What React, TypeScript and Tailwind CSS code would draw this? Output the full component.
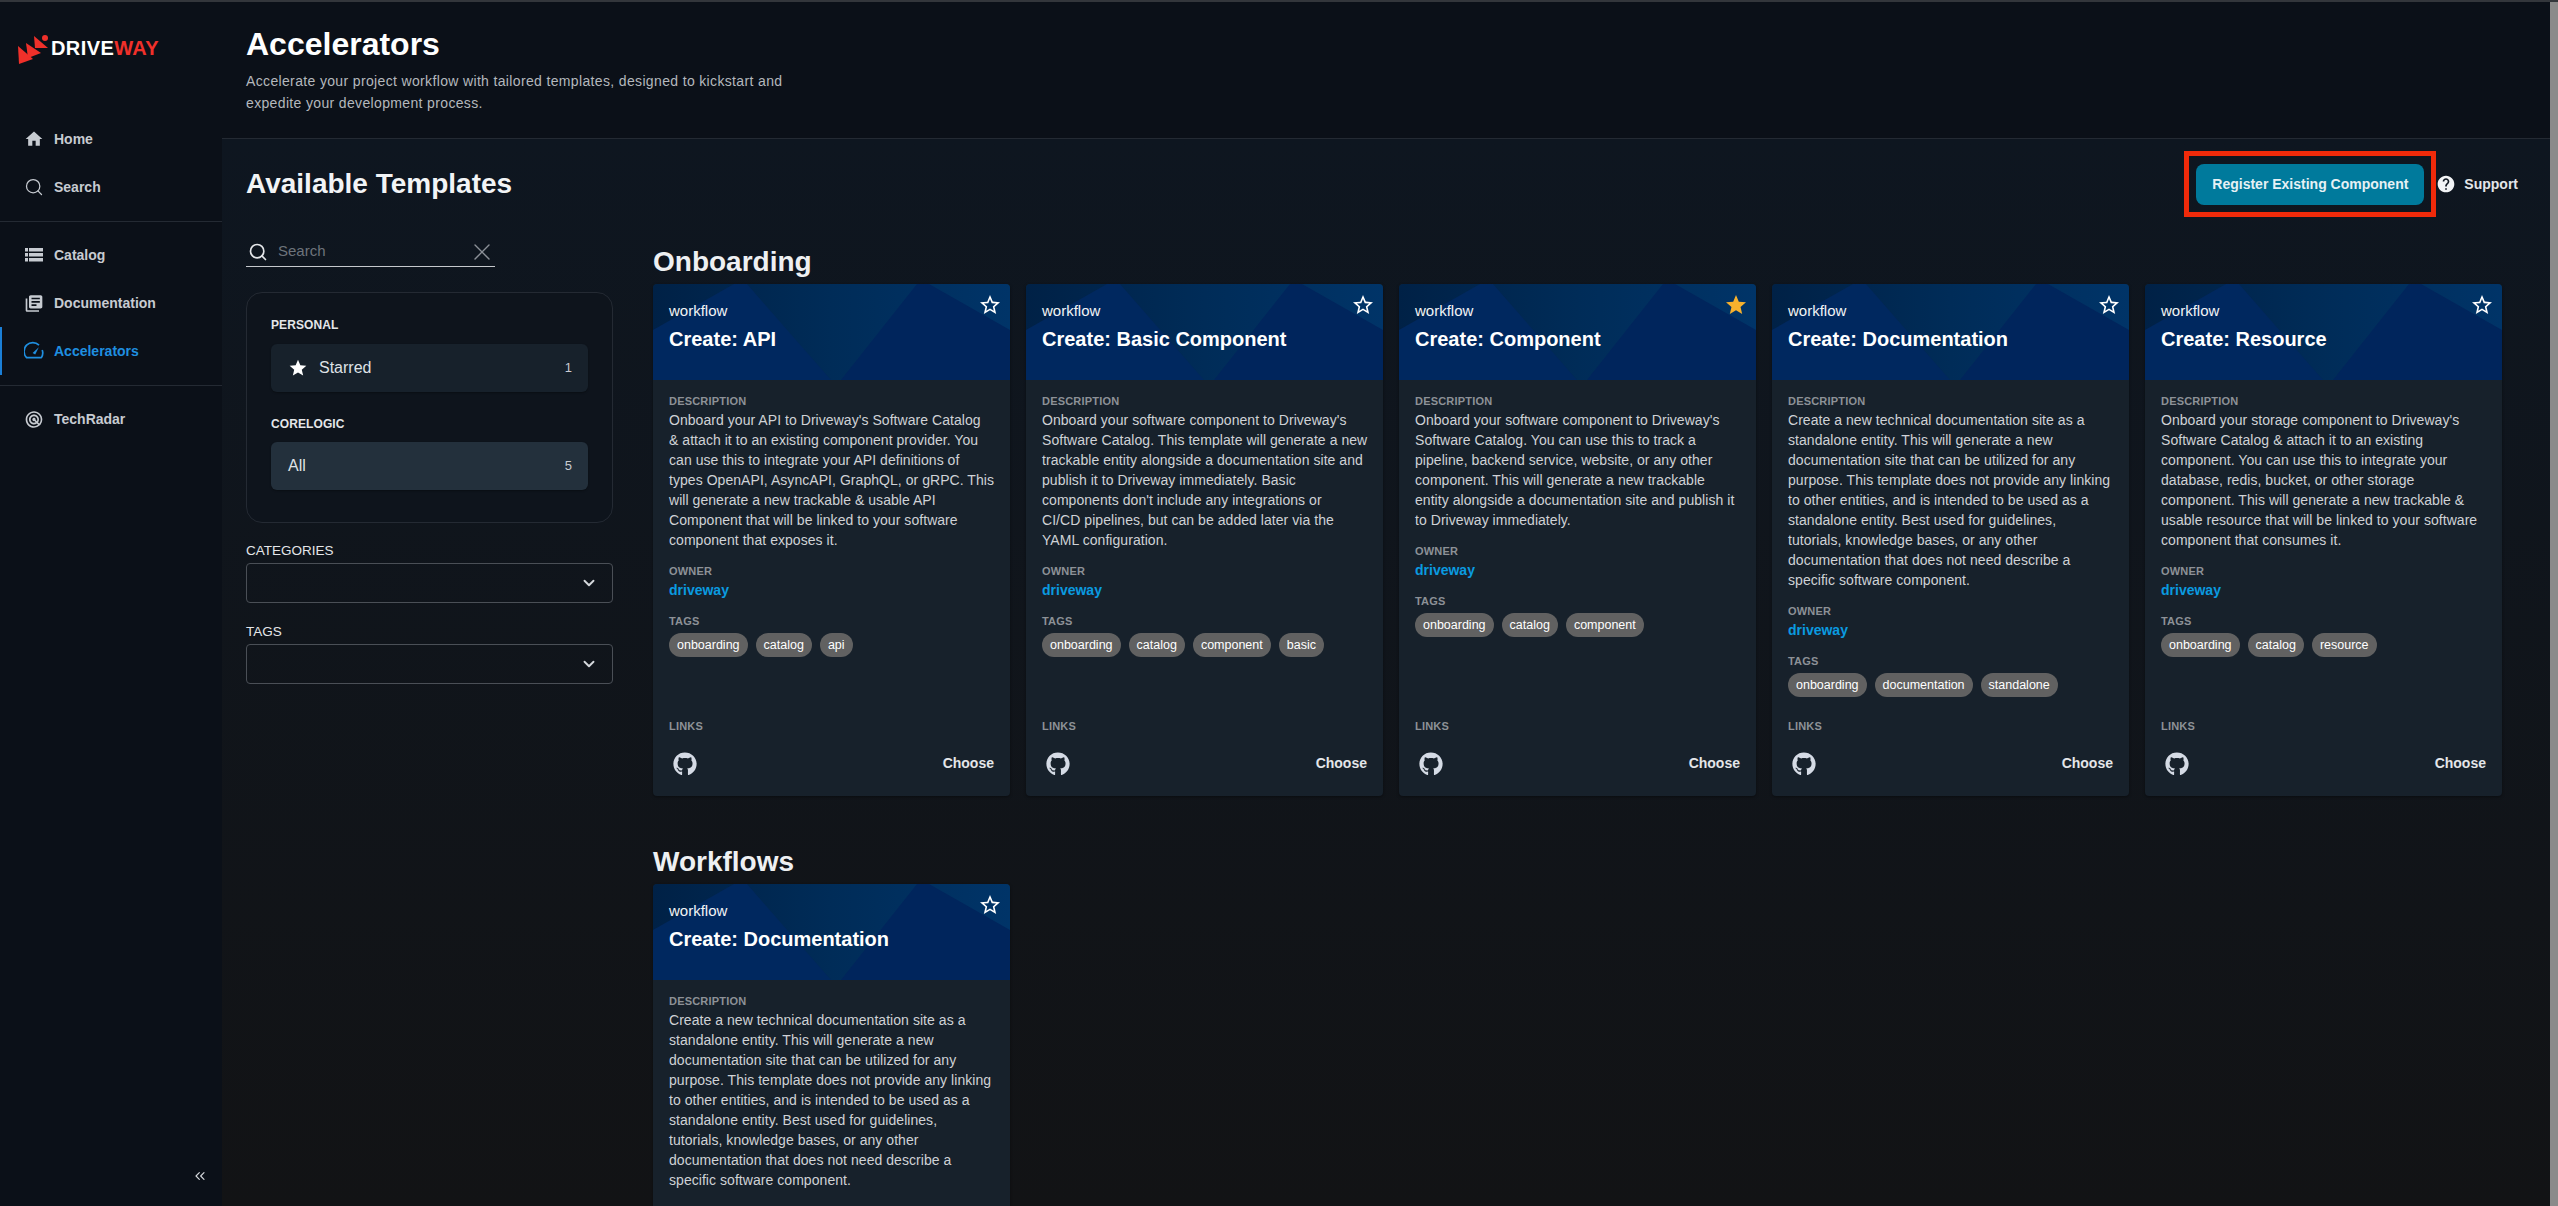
import { ChevronDown, ChevronsLeft, Search, X } from 'lucide-react';
import type { ReactNode } from 'react';
import { FaGithub } from 'react-icons/fa';
import { MdHelp, MdHome, MdLibraryBooks, MdRadar, MdStar, MdStarBorder } from 'react-icons/md';

const FONT = "font-['Liberation_Sans',Arial,sans-serif]";

// descriptions are kept line by line, the wrapping is part of the look
const ONBOARDING = [
  {
    title: 'Create: API',
    body: [
      "Onboard your API to Driveway's Software Catalog",
      '& attach it to an existing component provider. You',
      'can use this to integrate your API definitions of',
      'types OpenAPI, AsyncAPI, GraphQL, or gRPC. This',
      'will generate a new trackable & usable API',
      'Component that will be linked to your software',
      'component that exposes it.',
    ],
    tags: ['onboarding', 'catalog', 'api'],
  },
  {
    title: 'Create: Basic Component',
    body: [
      "Onboard your software component to Driveway's",
      'Software Catalog. This template will generate a new',
      'trackable entity alongside a documentation site and',
      'publish it to Driveway immediately. Basic',
      "components don't include any integrations or",
      'CI/CD pipelines, but can be added later via the',
      'YAML configuration.',
    ],
    tags: ['onboarding', 'catalog', 'component', 'basic'],
  },
  {
    title: 'Create: Component',
    body: [
      "Onboard your software component to Driveway's",
      'Software Catalog. You can use this to track a',
      'pipeline, backend service, website, or any other',
      'component. This will generate a new trackable',
      'entity alongside a documentation site and publish it',
      'to Driveway immediately.',
    ],
    tags: ['onboarding', 'catalog', 'component'],
    starred: true,
  },
  {
    title: 'Create: Documentation',
    body: [
      'Create a new technical documentation site as a',
      'standalone entity. This will generate a new',
      'documentation site that can be utilized for any',
      'purpose. This template does not provide any linking',
      'to other entities, and is intended to be used as a',
      'standalone entity. Best used for guidelines,',
      'tutorials, knowledge bases, or any other',
      'documentation that does not need describe a',
      'specific software component.',
    ],
    tags: ['onboarding', 'documentation', 'standalone'],
  },
  {
    title: 'Create: Resource',
    body: [
      "Onboard your storage component to Driveway's",
      'Software Catalog & attach it to an existing',
      'component. You can use this to integrate your',
      'database, redis, bucket, or other storage',
      'component. This will generate a new trackable &',
      'usable resource that will be linked to your software',
      'component that consumes it.',
    ],
    tags: ['onboarding', 'catalog', 'resource'],
  },
];

const WORKFLOWS = [ONBOARDING[3]];

function Logo() {
  return (
    <div className="flex items-start">
      <svg width="32" height="30" viewBox="0 0 32 30" className="shrink-0">
        <circle cx="27" cy="3" r="3" fill="#f0302a" />
        <polygon points="0,11 15,24 1,29" fill="#f0302a" />
        <polygon points="8,8 23,18 10,23" fill="#f0302a" />
        <polygon points="16,1 30,13 17,13" fill="#f0302a" />
      </svg>
      <span className="ml-[1px] mt-[2px] text-[20px] leading-[23px] font-bold tracking-[0.4px] text-white">
        DRIVE<span className="text-[#f0302a]">WAY</span>
      </span>
    </div>
  );
}

function CatalogIcon() {
  return (
    <svg width="18" height="16" viewBox="0 0 18 16" fill="currentColor">
      <rect x="0" y="1" width="3" height="3.5" />
      <rect x="4" y="1" width="14" height="3.5" />
      <rect x="0" y="6" width="3" height="3.5" />
      <rect x="4" y="6" width="14" height="3.5" />
      <rect x="0" y="11" width="3" height="3.5" />
      <rect x="4" y="11" width="14" height="3.5" />
    </svg>
  );
}

function GaugeIcon() {
  return (
    <svg width="20" height="20" viewBox="0 0 20 20" fill="none" stroke="currentColor" strokeWidth="1.7">
      <path d="M15 4.2A8.6 8.6 0 0 0 2.6 16.6h14.8a8.6 8.6 0 0 0 .8-7.6" strokeLinejoin="round" />
      <polygon points="8.6,12 14.8,6.2 11.2,13.6" fill="currentColor" stroke="none" />
    </svg>
  );
}

function NavItem({ icon, label, active }: { icon: ReactNode; label: string; active?: boolean }) {
  return (
    <div
      className={`flex items-center h-[48px] pl-[22px] gap-[10px] text-[14px] font-bold border-l-2 ${
        active ? 'border-[#1b7fd6] text-[#1f8fe0]' : 'border-transparent text-[#c7cbd1]'
      }`}
    >
      <span className="w-[20px] flex justify-center">{icon}</span>
      {label}
    </div>
  );
}

function Sidebar() {
  return (
    <aside className="w-[222px] shrink-0 flex flex-col bg-[#0b1018] relative">
      <div className="h-[113px] pl-[18px] pt-[33px]">
        <Logo />
      </div>
      <NavItem icon={<MdHome size={20} />} label="Home" />
      <NavItem icon={<Search size={20} strokeWidth={1.5} />} label="Search" />
      <div className="h-px bg-[#242a33] mt-[10px]" />
      <div className="h-[9px]" />
      <NavItem icon={<CatalogIcon />} label="Catalog" />
      <NavItem icon={<MdLibraryBooks size={21} />} label="Documentation" />
      <NavItem icon={<GaugeIcon />} label="Accelerators" active />
      <div className="h-px bg-[#242a33] mt-[10px]" />
      <div className="h-[9px]" />
      <NavItem icon={<MdRadar size={21} />} label="TechRadar" />
      <ChevronsLeft
        size={16}
        strokeWidth={1.75}
        className="absolute left-[192px] bottom-[22px] text-[#d5d8dc]"
      />
    </aside>
  );
}

function FilterRow({
  label,
  count,
  selected,
  icon,
}: {
  label: string;
  count: number;
  selected?: boolean;
  icon?: ReactNode;
}) {
  return (
    <div
      className={`h-[48px] rounded-[6px] flex items-center justify-between pr-[16px] pl-[17px] text-[16px] text-[#dfe2e6] shadow-[0_1px_2px_rgba(0,0,0,0.3)] ${
        selected ? 'bg-[#23303c]' : 'bg-[#17212b]'
      }`}
    >
      <span className="flex items-center gap-[11px]">
        {icon}
        {label}
      </span>
      <span className="text-[13px] text-[#c9ccd1]">{count}</span>
    </div>
  );
}

function Select({ label }: { label: string }) {
  return (
    <div>
      <div className="text-[13.5px] leading-[16px] text-[#e4e6e9]">{label}</div>
      <div className="mt-[4px] h-[40px] rounded-[4px] border border-[#4a4f56] flex items-center justify-end pr-[14px]">
        <ChevronDown size={18} strokeWidth={2.5} className="text-[#d5d8dc]" />
      </div>
    </div>
  );
}

function Filters() {
  return (
    <div className="w-[367px] shrink-0 mr-[40px]">
      <div className="w-[249px] h-[35px] mt-[3px] border-b border-[#c5c8cc] flex items-center pt-[5px]">
        <Search size={20} strokeWidth={2} className="ml-[2px] text-[#e4e6e9]" />
        <span className="ml-[10px] flex-1 text-[15px] text-[#6d737b]">Search</span>
        <X size={28} strokeWidth={1.2} className="-mr-[1px] text-[#8b9097]" />
      </div>
      <div className="mt-[25px] h-[231px] rounded-[16px] border border-[#242a33] bg-[#0e141c] px-[24px] pt-[24px]">
        <div className="text-[12px] leading-[16px] font-bold tracking-[0.1px] text-[#e4e6e9]">PERSONAL</div>
        <div className="mt-[11px]">
          <FilterRow label="Starred" count={1} icon={<MdStar size={20} className="text-white" />} />
        </div>
        <div className="mt-[24px] text-[12px] leading-[16px] font-bold tracking-[0.1px] text-[#e4e6e9]">CORELOGIC</div>
        <div className="mt-[10px]">
          <FilterRow label="All" count={5} selected />
        </div>
      </div>
      <div className="mt-[20px] flex flex-col gap-[21px]">
        <Select label="CATEGORIES" />
        <Select label="TAGS" />
      </div>
    </div>
  );
}

function CardHeader({ title, starred }: { title: string; starred?: boolean }) {
  return (
    <div className="relative h-[96px] bg-gradient-to-r from-[#002146] via-[#002c58] to-[#003468] overflow-hidden rounded-t-[4px]">
      <svg className="absolute inset-0 w-full h-full" viewBox="0 0 357 96" preserveAspectRatio="none">
        <polygon points="0,46 81,0 94,0 178,96 0,96" fill="#00285f" />
        <polygon points="188,96 264,0 276,0 357,46 357,96" fill="#00255c" />
      </svg>
      <div className="relative px-[16px] pt-[17px]">
        <div className="text-[15px] leading-[20px] text-[#f2f4f6]">workflow</div>
        <div className="mt-[6px] text-[20px] leading-[24px] font-bold text-white">{title}</div>
      </div>
      <span className="absolute right-[8px] top-[9px]">
        {starred ? (
          <MdStar size={24} className="text-[#f6b12d]" />
        ) : (
          <MdStarBorder size={24} className="text-white" />
        )}
      </span>
    </div>
  );
}

function Label({ children }: { children: ReactNode }) {
  return (
    <div className="text-[11px] leading-[14px] font-bold tracking-[0.2px] text-[#8d9197]">{children}</div>
  );
}

function TemplateCard({
  title,
  body,
  tags,
  starred,
}: {
  title: string;
  body: string[];
  tags: string[];
  starred?: boolean;
}) {
  return (
    <div className="h-[512px] rounded-[4px] bg-[#17212b] flex flex-col shadow-[0_1px_3px_rgba(0,0,0,0.4)]">
      <CardHeader title={title} starred={starred} />
      <div className="flex-1 flex flex-col px-[16px] pt-[14px]">
        <Label>DESCRIPTION</Label>
        <p className="mt-[2px] text-[14px] leading-[20px] tracking-[0.05px] text-[#cfd2d6]">
          {body.map((line) => (
            <span key={line} className="block whitespace-nowrap">
              {line}
            </span>
          ))}
        </p>
        <div className="mt-[14px]">
          <Label>OWNER</Label>
          <div className="mt-[2px] text-[14px] leading-[20px] font-bold text-[#0a9be0]">driveway</div>
        </div>
        <div className="mt-[14px]">
          <Label>TAGS</Label>
          <div className="mt-[5px] flex flex-wrap gap-[8px]">
            {tags.map((t) => (
              <span
                key={t}
                className="h-[24px] px-[8px] rounded-full bg-[#616161] text-white text-[12.5px] leading-[24px]"
              >
                {t}
              </span>
            ))}
          </div>
        </div>
        <div className="mt-auto mb-[63px]">
          <Label>LINKS</Label>
        </div>
      </div>
      <div className="relative">
        <FaGithub size={24} className="absolute left-[20px] bottom-[20px] text-[#d5dbe5]" />
        <span className="absolute right-[16px] bottom-[24px] text-[14px] leading-[18px] font-bold text-[#e4e6e9]">
          Choose
        </span>
      </div>
    </div>
  );
}

function Section({ title, items }: { title: string; items: typeof ONBOARDING }) {
  return (
    <section>
      <h2 className="text-[28px] leading-[32px] font-bold text-[#eef0f2]">{title}</h2>
      <div className="mt-[6px] grid grid-cols-5 gap-[16px]">
        {items.map((c) => (
          <TemplateCard key={c.title} {...c} />
        ))}
      </div>
    </section>
  );
}

export default function App() {
  return (
    <div className={`${FONT} h-screen overflow-hidden flex flex-col bg-[#0b1018]`}>
      <div className="h-[2px] shrink-0 bg-[#33363b]" />
      <div className="flex-1 min-h-0 flex">
        <Sidebar />
        <div className="flex-1 min-w-0 flex flex-col">
          <header className="h-[137px] shrink-0 border-b border-[#242a33] pl-[24px] pt-[22px] bg-[#0b1018]">
            <h1 className="text-[32px] leading-[40px] font-bold text-white">Accelerators</h1>
            <p className="mt-[6px] w-[580px] text-[14px] leading-[22px] tracking-[0.35px] text-[#b4b8bd]">
              Accelerate your project workflow with tailored templates, designed to kickstart and expedite your
              development process.
            </p>
          </header>
          <main className="flex-1 min-h-0 overflow-hidden bg-gradient-to-b from-[#0e1620] to-[#121315] pl-[24px] pr-[48px]">
            <div className="flex items-center justify-between h-[90px] mr-[-16px]">
              <h2 className="text-[28px] leading-[36px] font-bold text-[#f2f4f6]">Available Templates</h2>
              <div className="flex items-center">
                <div className="h-[66px] border-[5px] border-[#f02a0a] px-[7px] flex items-center">
                  <button className="w-[228px] h-[41px] rounded-[8px] bg-[#007a9c] text-[14px] font-bold text-[#e6f1f5]">
                    Register Existing Component
                  </button>
                </div>
                <MdHelp size={20} className="text-[#f2f4f6]" />
                <span className="ml-[8px] text-[14px] font-bold text-[#e4e6e9]">Support</span>
              </div>
            </div>
            <div className="flex">
              <Filters />
              <div className="flex-1 min-w-0 flex flex-col gap-[50px] mt-[17px]">
                <Section title="Onboarding" items={ONBOARDING} />
                <Section title="Workflows" items={WORKFLOWS} />
              </div>
            </div>
          </main>
        </div>
        <div className="w-[8px] shrink-0 bg-[#8a8a8a]" />
      </div>
    </div>
  );
}
